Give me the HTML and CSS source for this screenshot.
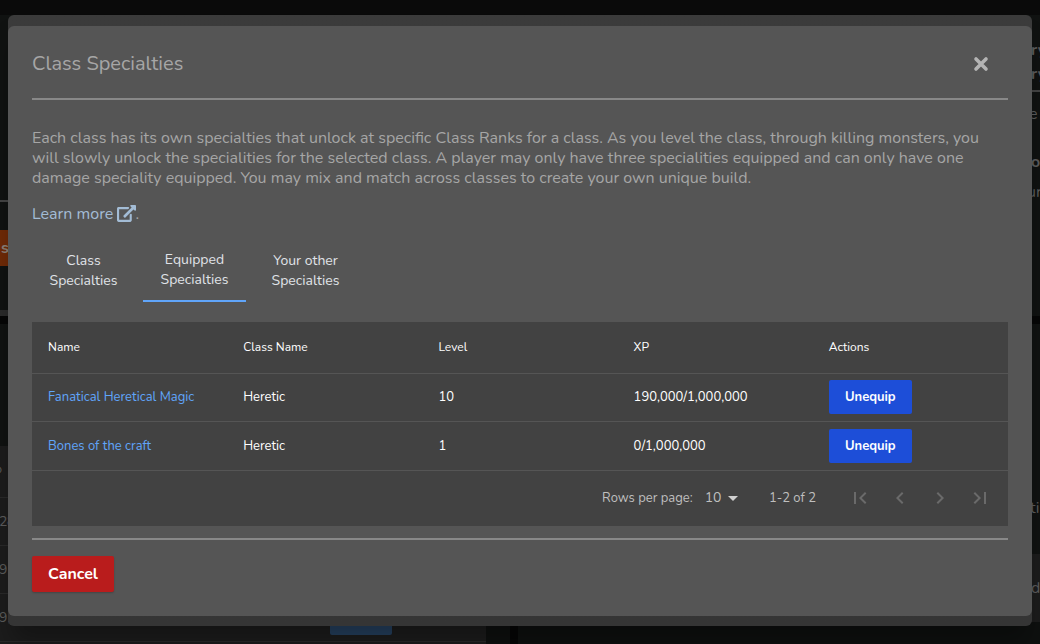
FILE: index.html
```html
<!DOCTYPE html>
<html lang="en">
<head>
<meta charset="utf-8">
<title>Class Specialties</title>
<link rel="stylesheet" href="styles.css">
</head>
<body>
<div class="page" aria-hidden="true">
  <div class="topbar"></div>
  <div class="columns">
    <div class="column left">
      <div class="card stats"><hr class="rule"><div class="tag">s</div></div>
      <div class="strip"></div>
      <div class="gap"></div>
      <div class="card map"></div>
      <div class="list">
        <div class="list-row first"><span>p</span></div>
        <div class="list-row"><span class="n28">28</span></div>
        <div class="list-row"><span class="n9">9,</span></div>
        <div class="list-row"><span class="n9">9,</span><span class="pill"></span></div>
        <div class="list-row end"></div>
      </div>
    </div>
    <div class="column right">
      <div class="card info">
        <b>ry</b><b>ry</b><hr class="rule">
        <span class="e">e</span><b class="o">o</b><span class="ur">ur</span>
      </div>
      <div class="gap"></div>
      <div class="card chat"><span>tin</span></div>
      <div class="note">d</div>
      <div class="card rest"></div>
    </div>
  </div>
</div>

<div class="overlay">
  <div class="modal-back">
    <section class="modal" role="dialog" aria-labelledby="title">
      <header class="modal-head">
        <h3 id="title">Class Specialties</h3>
        <svg class="close" viewBox="0 0 14 14"><path d="M2 2 12 12M12 2 2 12"/></svg>
      </header>
      <hr class="divider">
      <p class="intro">Each class has its own specialties that unlock at specific Class Ranks for a class. As you level the class, through killing monsters, you will slowly unlock the specialities for the selected class. A player may only have three specialities equipped and can only have one damage speciality equipped. You may mix and match across classes to create your own unique build.</p>
      <p class="more"><a>Learn more <svg class="ext" viewBox="0 0 576 512"><path d="M576 24v127.984c0 21.461-25.96 31.98-40.971 16.971l-35.707-35.709-243.523 243.523c-9.373 9.373-24.568 9.373-33.941 0l-22.627-22.627c-9.373-9.373-9.373-24.569 0-33.941L442.756 76.676l-35.703-35.705C391.982 25.9 402.656 0 424.024 0H552c13.255 0 24 10.745 24 24zM407.029 270.794l-16 16A23.999 23.999 0 0 0 384 303.765V448H64V128h264a24.003 24.003 0 0 0 16.97-7.029l16-16C376.089 89.851 365.381 64 344 64H48C21.49 64 0 85.49 0 112v352c0 26.51 21.49 48 48 48h352c26.51 0 48-21.49 48-48V287.764c0-21.382-25.852-32.09-40.971-16.97z"/></svg></a>.</p>
      <nav class="tabs">
        <button class="tab">Class Specialties</button>
        <button class="tab active">Equipped Specialties</button>
        <button class="tab">Your other Specialties</button>
      </nav>
      <div class="table">
        <div class="row head"><div>Name</div><div>Class Name</div><div>Level</div><div>XP</div><div>Actions</div></div>
        <div class="row"><div class="link">Fanatical Heretical Magic</div><div>Heretic</div><div>10</div><div>190,000/1,000,000</div><div><button class="btn unequip">Unequip</button></div></div>
        <div class="row last"><div class="link">Bones of the craft</div><div>Heretic</div><div>1</div><div>0/1,000,000</div><div><button class="btn unequip">Unequip</button></div></div>
        <div class="pager">
          <span>Rows per page:</span>
          <span class="select">10<svg viewBox="0 0 24 24"><path d="M7 10l5 5 5-5z"/></svg></span>
          <span class="range">1-2 of 2</span>
          <span class="arrows">
            <svg viewBox="0 0 24 24"><path d="M18.41 16.59L13.82 12l4.59-4.59L17 6l-6 6 6 6zM6 6h2v12H6z"/></svg>
            <svg viewBox="0 0 24 24"><path d="M15.41 7.41L14 6l-6 6 6 6 1.41-1.41L10.83 12z"/></svg>
            <svg viewBox="0 0 24 24"><path d="M10 6L8.59 7.41 13.17 12l-4.58 4.59L10 18l6-6z"/></svg>
            <svg viewBox="0 0 24 24"><path d="M5.59 7.41L10.18 12l-4.59 4.59L7 18l6-6-6-6zM16 6h2v12h-2z"/></svg>
          </span>
        </div>
      </div>
      <hr class="divider bottom">
      <button class="btn cancel">Cancel</button>
    </section>
  </div>
</div>
</body>
</html>
```
FILE: styles.css
```css
* { box-sizing: border-box; }
body {
  margin: 0;
  width: 1040px;
  height: 644px;
  overflow: hidden;
  background: #060606;
  font: 16px/20px Nunito, Lato, "Open Sans", sans-serif;
  color: #a6a6a6;
}
h3, p, hr { margin: 0; border: 0; font-weight: 400; }
button { border: 0; padding: 0; margin: 0; background: none; font-family: inherit; }

/* Dimmed page behind the dialog */
.page { height: 644px; display: flex; flex-direction: column; color: #5c5c5c; }
.topbar { height: 15px; background: #0a0a0a; }
.columns { flex: 1; display: grid; grid-template-columns: 510px 522px; column-gap: 8px; min-height: 0; }
.column { display: flex; flex-direction: column; min-height: 0; }
.card { background: #101211; }
.gap { height: 8px; background: #060606; }
.rule { height: 2px; background: #444; }
.stats { height: 295px; padding-top: 185px; }
.tag { width: 120px; height: 36px; margin-top: 28px; padding-left: 1px; background: #6f2a07; color: #8b8179; font-weight: 700; line-height: 36px; }
.strip { height: 6px; background: #2a2a2a; }
.map { height: 122px; }
.list { flex: 1; width: 486px; background: #1c1c1c; box-shadow: 24px 0 #0e100f; font-size: 14px; min-height: 0; }
.list-row { height: 48px; border-top: 1px solid #292929; display: flex; align-items: center; }
.list-row.first { height: 51px; border: 0; font-size: 12px; padding: 0 0 6px; }
.list-row.first span { margin-left: -5px; }
.list-row span:not(.pill) { width: 12px; }
.list-row .n28 { margin-left: -1px; letter-spacing: -.5px; }
.list-row .n9 { margin-left: -1px; width: 13px; }
.list-row.end { height: 3px; }
.pill { width: 62px; height: 35px; margin: -1px 0 0 319px; background: #25405f; border-radius: 2px; }
.info { height: 301px; padding: 25px 0 0 513px; display: flex; flex-direction: column; white-space: nowrap; }
.info b { height: 24px; }
.info .rule { margin: 2px 0; flex: none; }
.info .e { margin: 10px 0 0 -2px; height: 20px; }
.info .o { margin-top: 28px; height: 20px; }
.info .ur { margin: 10px 0 0 -4px; }
.chat { height: 230px; padding: 174px 0 0 512px; white-space: nowrap; }
.note { height: 68px; background: #1c1c1c; padding: 24px 0 0 513px; }
.rest { flex: 1; background: #0e100f; }

/* Dialog */
.overlay { position: absolute; inset: 0; padding: 15px 8px 18px; }
.modal-back { height: 611px; padding: 11px 0 10px; border-radius: 6px; background: linear-gradient(#3b3b3b, #353535); box-shadow: 0 20px 25px -5px rgba(0,0,0,.3); }
.modal { height: 590px; padding: 24px; border-radius: 6px; background: #555; }
.modal-head { height: 48px; display: flex; justify-content: space-between; padding: 4px 20px 0 0; }
.modal-head h3 { font-size: 20px; line-height: 20px; }
.close { width: 14px; height: 14px; margin-top: 3px; overflow: visible; }
.close path { stroke: #b4b4b4; stroke-width: 3.6; stroke-linecap: round; fill: none; }
.divider { height: 2px; background: #888; }
.intro { margin-top: 28px; }
.more { margin-top: 16px; height: 20px; }
.more a { color: #a3bcd5; }
.ext { width: 19px; height: 16.9px; fill: currentColor; vertical-align: -2.5px; margin-right: -1px; }
.tabs { display: flex; gap: 8px; margin-top: 18px; height: 60px; }
.tab { width: 103px; padding: 0 16px 3px; color: #e0e3e8; font-size: 14px; line-height: 20px; text-align: center; }
.tab.active { border-bottom: 2px solid #60a5fa; }
.table { margin-top: 20px; height: 204px; background: #424242; color: #fff; font-size: 13px; }
.row { display: grid; grid-template-columns: repeat(5, 1fr); height: 48px; align-items: center; border-bottom: 1px solid #555; padding-bottom: 2px; }
.row > div { padding-left: 16px; }
.row.head { height: 52px; font-size: 12px; }
.row.last { height: 49px; padding-bottom: 0; }
.link { color: #60a5fa; }
.btn { display: block; color: #fff; font-weight: 700; border-radius: 2px; }
.unequip { width: 83px; height: 34px; background: #1d4ed8; font-size: 13px; }
.pager { height: 55px; display: flex; align-items: center; justify-content: flex-end; padding: 0 16px 2px 0; color: #bfbfbf; }
.select { display: flex; align-items: center; margin-left: 12px; font-size: 14px; padding-top: 1px; }
.select svg { width: 24px; height: 24px; margin-left: -.6px; fill: #d0d0d0; }
.range { margin: 0 32px 0 24px; }
.arrows { display: flex; gap: 16px; fill: #6a6a6a; }
.arrows svg { width: 24px; height: 24px; display: block; }
.divider.bottom { margin-top: 12px; }
.cancel { width: 82px; height: 36px; margin-top: 16px; background: #b91c1c; font-size: 16px; box-shadow: 0 1px 2px rgba(0,0,0,.2); }
```
